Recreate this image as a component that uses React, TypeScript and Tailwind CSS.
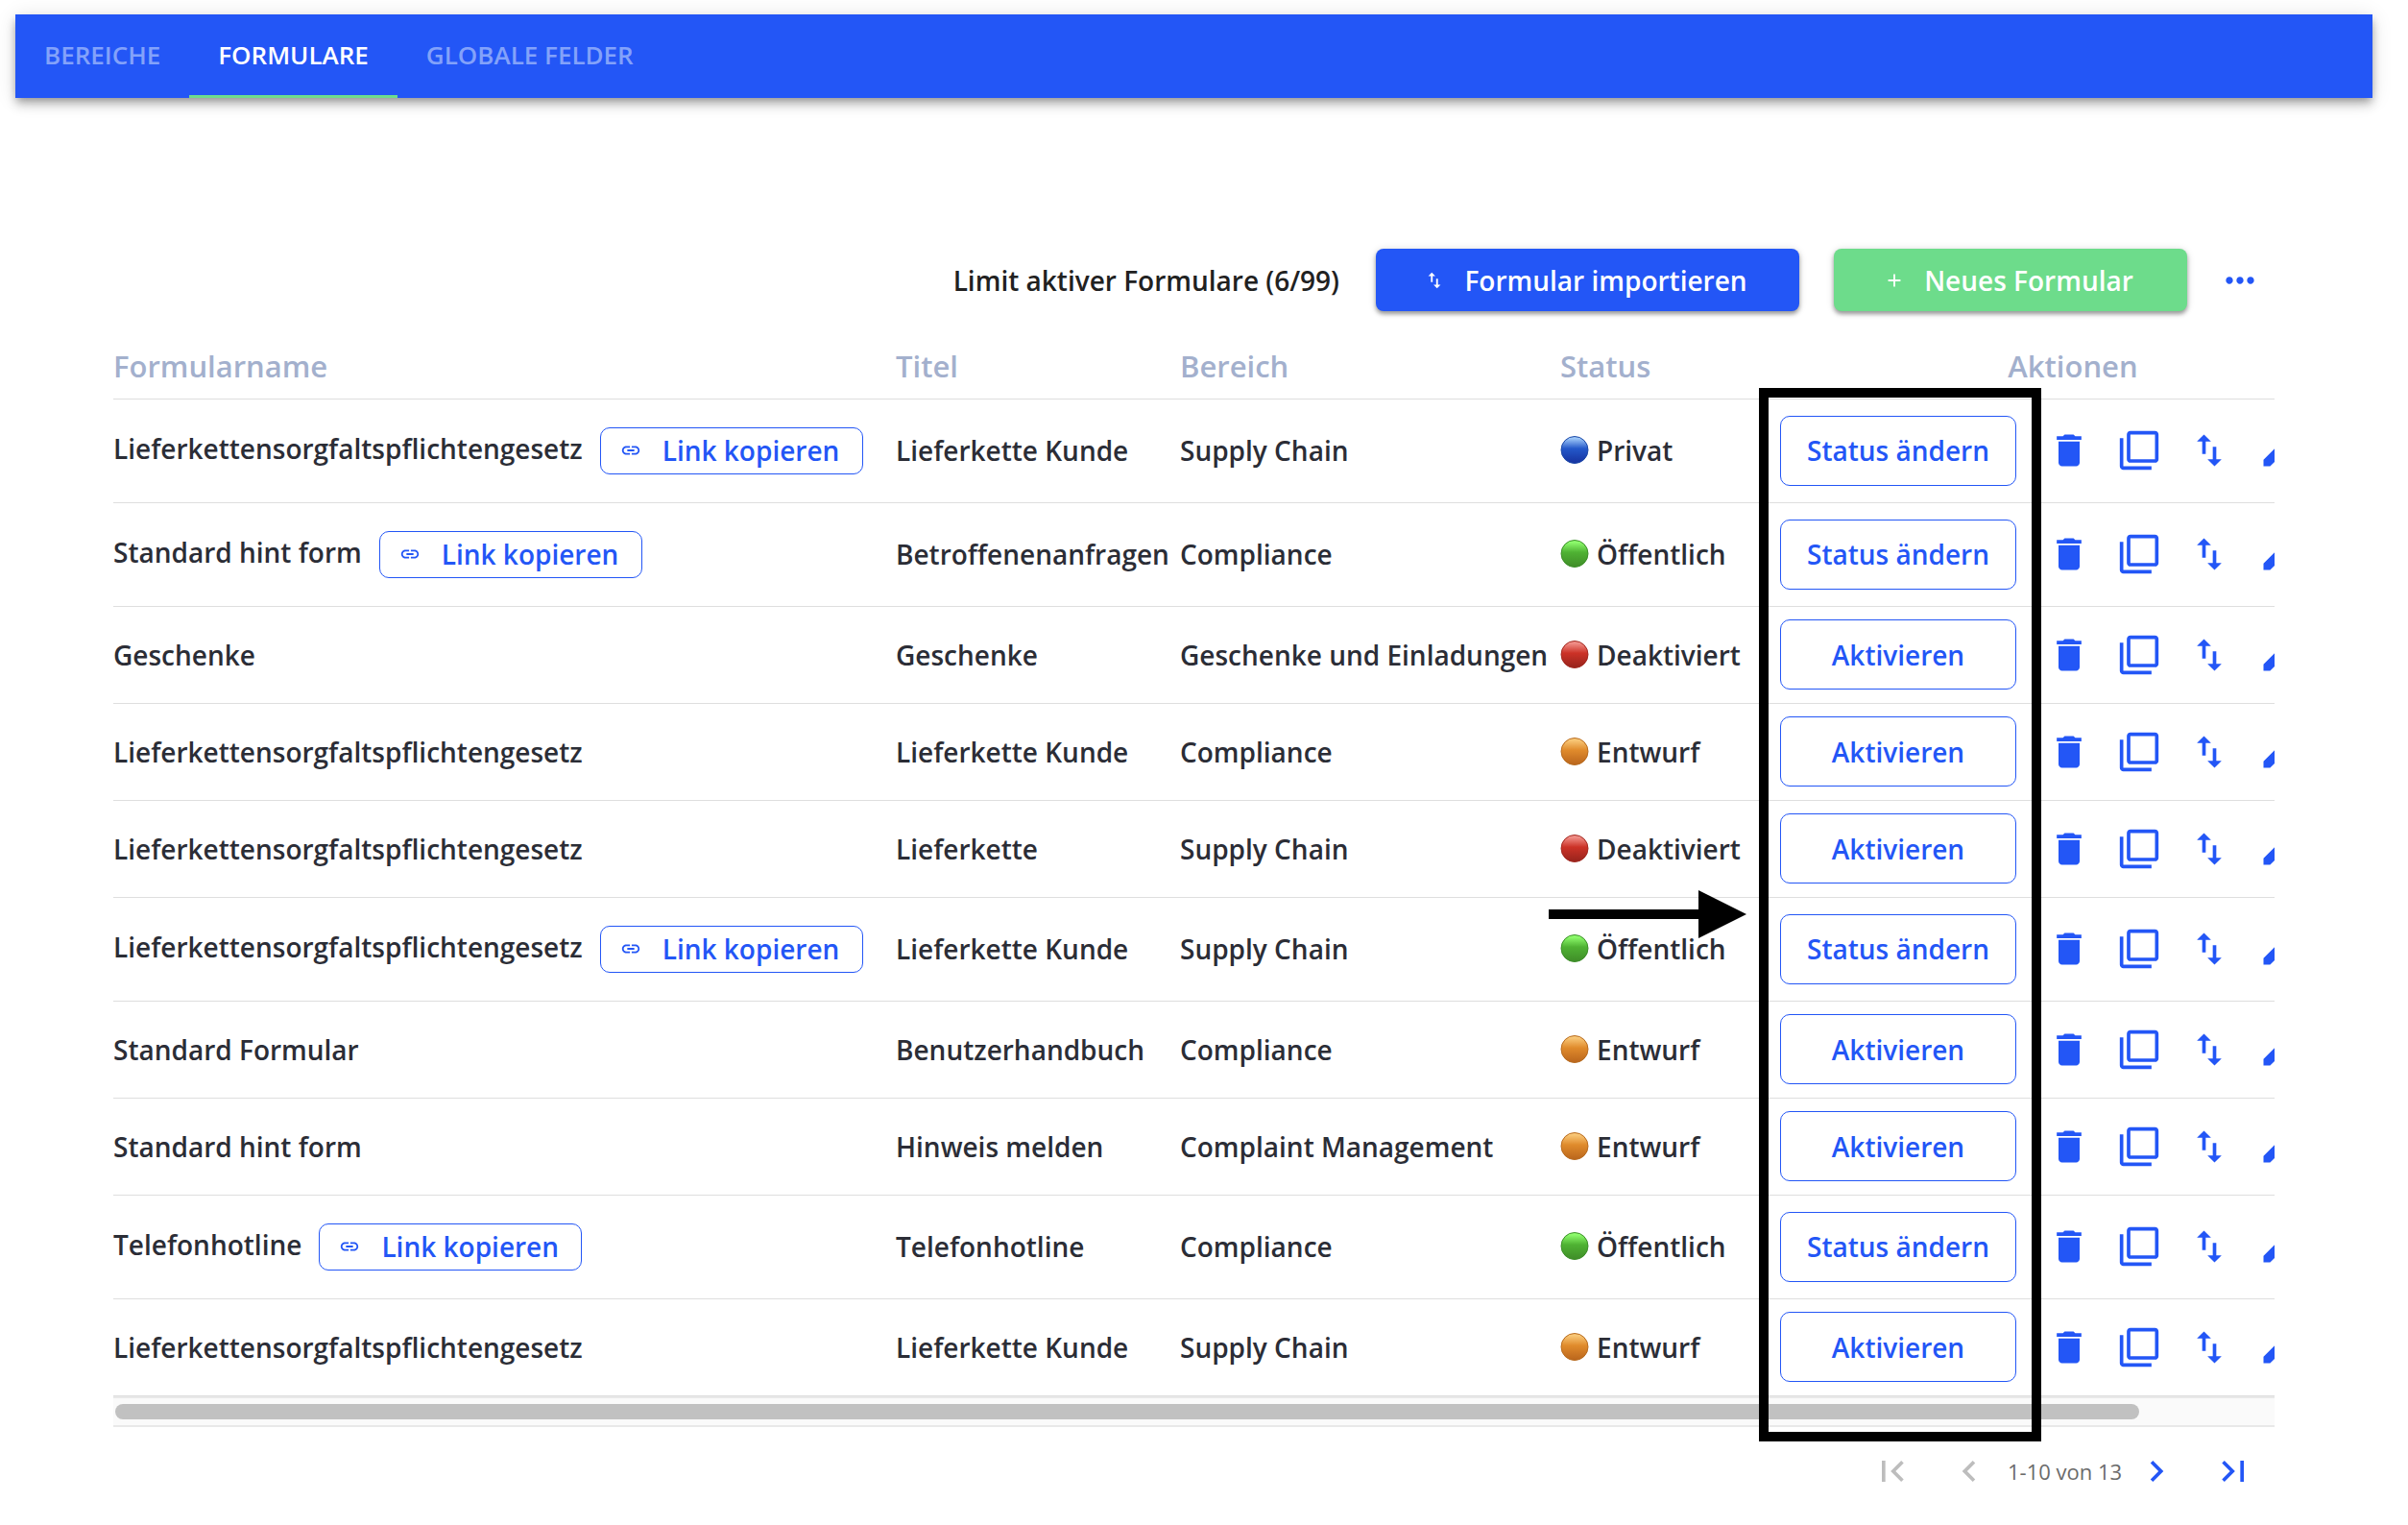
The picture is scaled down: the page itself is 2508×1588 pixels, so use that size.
import clsx from "clsx";
import {
  MdAdd,
  MdChevronLeft,
  MdChevronRight,
  MdDelete,
  MdEdit,
  MdFilterNone,
  MdFirstPage,
  MdLastPage,
  MdLink,
  MdMoreHoriz,
  MdSwapVert,
} from "react-icons/md";

type Status = "Privat" | "Öffentlich" | "Deaktiviert" | "Entwurf";

interface FormRow {
  id:     number;
  name:   string;
  title:  string;
  area:   string;
  status: Status;
}

const TABS = ["BEREICHE", "FORMULARE", "GLOBALE FELDER"];

const ROWS: FormRow[] = [
  { id: 1,  name: "Lieferkettensorgfaltspflichtengesetz", title: "Lieferkette Kunde",   area: "Supply Chain",             status: "Privat" },
  { id: 2,  name: "Standard hint form",                   title: "Betroffenenanfragen", area: "Compliance",               status: "Öffentlich" },
  { id: 3,  name: "Geschenke",                            title: "Geschenke",           area: "Geschenke und Einladungen", status: "Deaktiviert" },
  { id: 4,  name: "Lieferkettensorgfaltspflichtengesetz", title: "Lieferkette Kunde",   area: "Compliance",               status: "Entwurf" },
  { id: 5,  name: "Lieferkettensorgfaltspflichtengesetz", title: "Lieferkette",         area: "Supply Chain",             status: "Deaktiviert" },
  { id: 6,  name: "Lieferkettensorgfaltspflichtengesetz", title: "Lieferkette Kunde",   area: "Supply Chain",             status: "Öffentlich" },
  { id: 7,  name: "Standard Formular",                    title: "Benutzerhandbuch",    area: "Compliance",               status: "Entwurf" },
  { id: 8,  name: "Standard hint form",                   title: "Hinweis melden",      area: "Complaint Management",     status: "Entwurf" },
  { id: 9,  name: "Telefonhotline",                       title: "Telefonhotline",      area: "Compliance",               status: "Öffentlich" },
  { id: 10, name: "Lieferkettensorgfaltspflichtengesetz", title: "Lieferkette Kunde",   area: "Supply Chain",             status: "Entwurf" },
];

// top, middle, bottom and rim colour of the glossy status ball
const BALL: Record<Status, [string, string, string, string]> = {
  Privat:      ["#9cc6f7", "#2458c9", "#16329f", "#1d4aa8"],
  Öffentlich:  ["#8dfb6c", "#4fb233", "#3f8c28", "#3d8f2a"],
  Deaktiviert: ["#f08f88", "#cc3227", "#96231c", "#a32a22"],
  Entwurf:     ["#f8c777", "#e08b2c", "#b9651c", "#b86c20"],
};

const ACTIONS = [
  { label: "Löschen",     Icon: MdDelete },
  { label: "Duplizieren", Icon: MdFilterNone },
  { label: "Exportieren", Icon: MdSwapVert },
  { label: "Bearbeiten",  Icon: MdEdit },
];

function StatusBall({ status }: { status: Status }) {
  const [top, mid, bottom, rim] = BALL[status];
  const id = `ball-${status}`;
  return (
    <svg viewBox="0 0 30 30" className="size-[30px] shrink-0" aria-hidden="true">
      <defs>
        <linearGradient id={id} x1="0" y1="0" x2="0" y2="1">
          <stop offset="0.08" stopColor={top} />
          <stop offset="0.45" stopColor={mid} />
          <stop offset="1" stopColor={bottom} />
        </linearGradient>
      </defs>
      <circle cx="15" cy="14.5" r="14" fill={`url(#${id})`} stroke={rim} strokeWidth="1" />
    </svg>
  );
}

function TabBar() {
  return (
    <nav className="mx-4 flex h-[87px] bg-[#2356f6] shadow-[0_4px_8px_-2px_rgba(0,0,0,0.3),0_8px_10px_rgba(0,0,0,0.14),0_2px_20px_rgba(0,0,0,0.12)]">
      {TABS.map((tab) => {
        const active = tab === "FORMULARE";
        return (
          <button
            key={tab}
            aria-current={active ? "page" : undefined}
            className={clsx(
              "border-b-3 px-[30px] text-[26px] font-semibold",
              active ? "border-[#6fdc8c] text-white" : "border-transparent text-[#83a2fa]",
            )}
          >
            {tab}
          </button>
        );
      })}
    </nav>
  );
}

function Toolbar() {
  return (
    <div className="flex items-center justify-end pr-[14px]">
      <span className="mr-[38px] text-[#212121]">Limit aktiver Formulare (6/99)</span>
      <button className="mr-9 flex h-[65px] w-[441px] items-center justify-center gap-5 rounded-lg bg-[#2356f6] pr-1 text-white shadow-[0_3px_4px_rgba(0,0,0,0.35),0_1px_8px_rgba(0,0,0,0.14)]">
        <MdSwapVert size={22} />
        Formular importieren
      </button>
      <button className="mr-[33px] flex h-[65px] w-[368px] items-center justify-center gap-5 rounded-lg bg-[#6ddc8b] pr-1 text-white shadow-[0_3px_4px_rgba(0,0,0,0.35),0_1px_8px_rgba(0,0,0,0.14)]">
        <MdAdd size={22} />
        Neues Formular
      </button>
      <button aria-label="Weitere Optionen" className="text-[#2356f6]">
        <MdMoreHoriz size={44} />
      </button>
    </div>
  );
}

function FormsTable() {
  return (
    <div className="overflow-hidden">
      <table className="w-[2408px] table-fixed border-collapse text-left whitespace-nowrap text-[#2b2d36]">
        <colgroup>
          <col className="w-[815px]" />
          <col className="w-[296px]" />
          <col className="w-[396px]" />
          <col className="w-[229px]" />
          <col />
        </colgroup>
        <thead className="text-[31px] text-[#a3b0cd]">
          <tr className="h-[67px] border-b border-[#dedede]">
            <th className="font-semibold">Formularname</th>
            <th className="font-semibold">Titel</th>
            <th className="font-semibold">Bereich</th>
            <th className="font-semibold">Status</th>
            <th className="pr-[62px] text-center font-semibold">Aktionen</th>
          </tr>
        </thead>
        <tbody>
          {ROWS.map((row) => {
            const live = row.status === "Privat" || row.status === "Öffentlich";
            return (
              <tr key={row.id} className={clsx("border-b border-[#dedede]", live ? "h-[108px]" : "h-[101px]")}>
                <td>
                  <div className="flex items-center gap-[18px]">
                    <span className={clsx(live && "pb-1")}>{row.name}</span>
                    {live && (
                      <button className="flex h-[49px] w-[274px] items-center gap-[22px] rounded-[10px] border border-[#2356f6] pl-5 text-[#2356f6]">
                        <MdLink size={22} />
                        Link kopieren
                      </button>
                    )}
                  </div>
                </td>
                <td>{row.title}</td>
                <td>{row.area}</td>
                <td>
                  <div className="flex items-center gap-2">
                    <StatusBall status={row.status} />
                    {row.status}
                  </div>
                </td>
                <td>
                  <div className="flex items-center text-[#2356f6]">
                    <button className="mr-[18px] h-[73px] w-[246px] shrink-0 rounded-[10px] border border-[#2356f6]">
                      {live ? "Status ändern" : "Aktivieren"}
                    </button>
                    {ACTIONS.map(({ label, Icon }) => (
                      <button
                        key={label}
                        aria-label={`${row.name} ${label}`}
                        className="flex h-[73px] w-[73px] shrink-0 items-center justify-center"
                      >
                        <Icon size={44} />
                      </button>
                    ))}
                  </div>
                </td>
              </tr>
            );
          })}
        </tbody>
      </table>
    </div>
  );
}

function Pagination() {
  return (
    <div className="mt-[6px] flex items-center justify-end pr-[3px] text-[#2356f6]">
      <button aria-label="Erste Seite" disabled className="p-[18px] text-[#bdbdbd]">
        <MdFirstPage size={44} />
      </button>
      <button aria-label="Vorherige Seite" disabled className="p-[18px] text-[#bdbdbd]">
        <MdChevronLeft size={44} />
      </button>
      <span className="w-[115px] text-center text-[22px] font-normal whitespace-nowrap text-[#6b6b6b]">
        1-10 von 13
      </span>
      <button aria-label="Nächste Seite" className="p-[18px]">
        <MdChevronRight size={44} />
      </button>
      <button aria-label="Letzte Seite" className="p-[18px]">
        <MdLastPage size={44} />
      </button>
    </div>
  );
}

export default function App() {
  return (
    <div className="min-h-screen bg-white pt-[15px] font-['Open_Sans',sans-serif] text-[28px] leading-[38px] font-semibold">
      <div className="mr-[21px]">
        <TabBar />
      </div>

      <main className="mr-[139px] ml-[118px] pt-[157px]">
        <Toolbar />

        <div className="relative mt-6">
          <FormsTable />

          {/* Horizontal scroll indicator below the table */}
          <div className="border-t-2 border-b-2 border-[#e8e8e8] bg-[#fafafa] py-[6px] pl-[2px]">
            <div className="h-4 w-15/16 rounded-full bg-[#c1c1c1]" />
          </div>

          {/* Marker around the status buttons */}
          <div className="pointer-events-none absolute top-14 -bottom-[15px] left-[1714px] w-[294px] border-10 border-black" />
          <svg
            viewBox="0 0 206 50"
            className="pointer-events-none absolute top-[579px] left-[1495px] h-[50px] w-[206px]"
            aria-hidden="true"
          >
            <path d="M0 20h156V0l50 25-50 25V30H0z" fill="#000" />
          </svg>
        </div>

        <Pagination />
      </main>
    </div>
  );
}
